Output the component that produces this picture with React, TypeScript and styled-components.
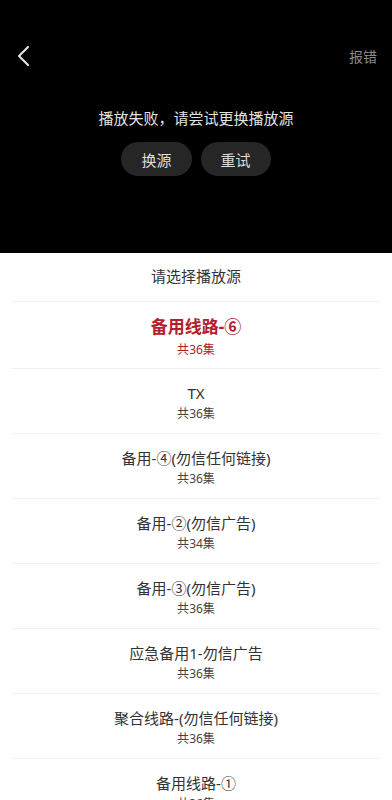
import React from 'react'
import styled, { createGlobalStyle } from 'styled-components'

const GlobalStyle = createGlobalStyle`
  body {
    margin: 0;
    background: #ffffff;
    font-family: "Noto Sans", "Noto Sans CJK SC", sans-serif;
  }
`

interface ISource {
  name: string
  count: number
}

const sources: ISource[] = [
  { name: '备用线路-⑥', count: 36 },
  { name: 'TX', count: 36 },
  { name: '备用-④(勿信任何链接)', count: 36 },
  { name: '备用-②(勿信广告)', count: 34 },
  { name: '备用-③(勿信广告)', count: 36 },
  { name: '应急备用1-勿信广告', count: 36 },
  { name: '聚合线路-(勿信任何链接)', count: 36 },
  { name: '备用线路-①', count: 36 }
]

const App: React.FC = () => (
  <>
    <GlobalStyle />
    <Page>
      <Player>
        <TopBar>
          <BackButton aria-label="返回">
            <svg width="14" height="22" viewBox="0 0 14 22" fill="none">
              <path
                d="M12 2 L3 11 L12 20"
                stroke="#e6e6e6"
                strokeWidth="2"
                strokeLinecap="round"
                strokeLinejoin="round"
              />
            </svg>
          </BackButton>
          <Report>报错</Report>
        </TopBar>
        <ErrorBox>
          <Message>播放失败，请尝试更换播放源</Message>
          <Actions>
            <PillButton>换源</PillButton>
            <PillButton>重试</PillButton>
          </Actions>
        </ErrorBox>
      </Player>
      <Sheet>
        <SheetTitle>请选择播放源</SheetTitle>
        {sources.map((s, i) => (
          <SourceRow key={s.name} $active={i === 0}>
            <SourceName $active={i === 0}>{s.name}</SourceName>
            <SourceCount $active={i === 0}>共{s.count}集</SourceCount>
          </SourceRow>
        ))}
      </Sheet>
    </Page>
  </>
)

const Page = styled.div`
  width: 392px;
  height: 800px;
  overflow: hidden;
  display: flex;
  flex-direction: column;
`

const Player = styled.div`
  height: 253px;
  background: #000000;
  display: flex;
  flex-direction: column;
  flex-shrink: 0;
`

const TopBar = styled.div`
  height: 40px;
  margin-top: 36px;
  display: flex;
  align-items: center;
  justify-content: space-between;
  padding: 0 15px 0 16px;
`

const BackButton = styled.button`
  background: none;
  border: none;
  padding: 0;
  display: flex;
  align-items: center;
`

const Report = styled.span`
  color: #8a8a8a;
  font-size: 14px;
`

const ErrorBox = styled.div`
  display: flex;
  flex-direction: column;
  align-items: center;
  margin-top: 30px;
`

const Message = styled.div`
  color: #e2e2e2;
  font-size: 15px;
  line-height: 24px;
`

const Actions = styled.div`
  display: flex;
  gap: 9px;
  margin-top: 12px;
`

const PillButton = styled.button`
  height: 34px;
  padding: 0 20px;
  border: none;
  border-radius: 17px;
  background: #262626;
  color: #dcdcdc;
  font-family: inherit;
  font-size: 15px;
`

const Sheet = styled.div`
  flex: 1;
  background: #ffffff;
  padding: 0 12px;
`

const SheetTitle = styled.div`
  height: 49px;
  box-sizing: border-box;
  padding-bottom: 4px;
  display: flex;
  align-items: center;
  justify-content: center;
  font-size: 15px;
  color: #333333;
  border-bottom: 1px solid #f0f0f0;
`

const SourceRow = styled.div<{ $active?: boolean }>`
  height: ${({ $active }) => ($active ? '66px' : '64px')};
  display: flex;
  flex-direction: column;
  align-items: center;
  justify-content: center;
  border-bottom: 1px solid #f0f0f0;
`

const SourceName = styled.div<{ $active?: boolean }>`
  font-size: ${({ $active }) => ($active ? '17px' : '15px')};
  font-weight: ${({ $active }) => ($active ? 700 : 400)};
  color: ${({ $active }) => ($active ? '#b3202c' : '#333333')};
  line-height: 22px;
  margin-top: ${({ $active }) => ($active ? '5px' : '3px')};
`

const SourceCount = styled.div<{ $active?: boolean }>`
  font-size: 12px;
  color: ${({ $active }) => ($active ? '#b3202c' : '#444444')};
  line-height: 18px;
  margin-top: ${({ $active }) => ($active ? '3px' : '1px')};
`

export default App
